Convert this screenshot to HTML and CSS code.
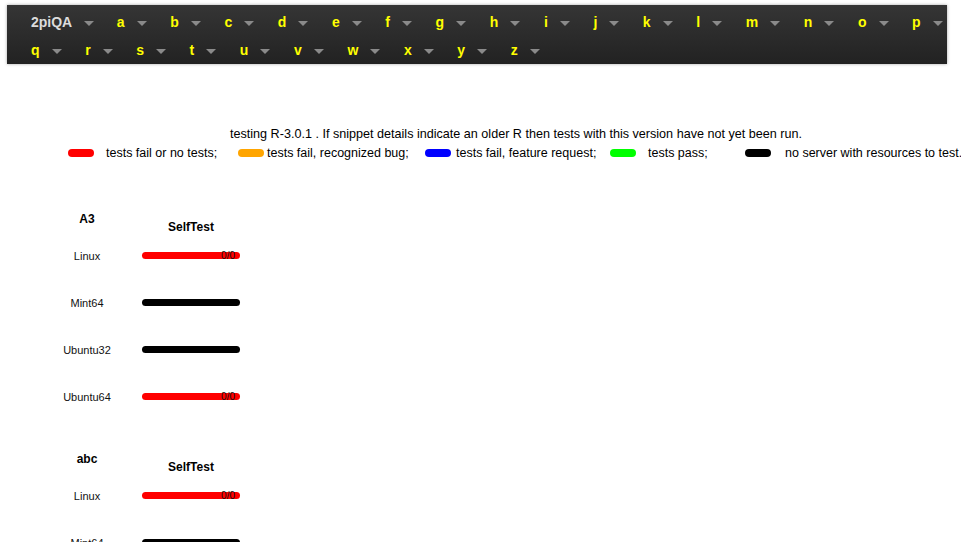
FILE: index.html
```html
<!DOCTYPE html>
<html>
<head>
<meta charset="utf-8">
<title>2piQA</title>
<link rel="stylesheet" href="styles.css">
</head>
<body>
<nav class="nav">
  <div class="nav-row">
    <a class="item brand">2piQA<span class="arrow"></span></a>
    <a class="item">a<span class="arrow"></span></a>
    <a class="item">b<span class="arrow"></span></a>
    <a class="item">c<span class="arrow"></span></a>
    <a class="item">d<span class="arrow"></span></a>
    <a class="item">e<span class="arrow"></span></a>
    <a class="item">f<span class="arrow"></span></a>
    <a class="item">g<span class="arrow"></span></a>
    <a class="item">h<span class="arrow"></span></a>
    <a class="item">i<span class="arrow"></span></a>
    <a class="item">j<span class="arrow"></span></a>
    <a class="item">k<span class="arrow"></span></a>
    <a class="item">l<span class="arrow"></span></a>
    <a class="item">m<span class="arrow"></span></a>
    <a class="item">n<span class="arrow"></span></a>
    <a class="item">o<span class="arrow"></span></a>
    <a class="item">p<span class="arrow"></span></a>
  </div>
  <div class="nav-row">
    <a class="item">q<span class="arrow"></span></a>
    <a class="item">r<span class="arrow"></span></a>
    <a class="item">s<span class="arrow"></span></a>
    <a class="item">t<span class="arrow"></span></a>
    <a class="item">u<span class="arrow"></span></a>
    <a class="item">v<span class="arrow"></span></a>
    <a class="item">w<span class="arrow"></span></a>
    <a class="item">x<span class="arrow"></span></a>
    <a class="item">y<span class="arrow"></span></a>
    <a class="item">z<span class="arrow"></span></a>
  </div>
</nav>

<div class="info">
  <div class="title">testing R-3.0.1 . If snippet details indicate an older R then tests with this version have not yet been run.</div>
  <div class="legend">
    <span class="pill red"></span><span class="ltext">tests fail or no tests;</span>
    <span class="pill orange"></span><span class="ltext">tests fail, recognized bug;</span>
    <span class="pill blue"></span><span class="ltext">tests fail, feature request;</span>
    <span class="pill green"></span><span class="ltext">tests pass;</span>
    <span class="pill black"></span><span class="ltext">no server with resources to test.</span>
  </div>
</div>

<div class="section first">
  <div class="pkg">A3</div><div class="test">SelfTest</div>
  <div class="os">Linux</div><div class="cell"><div class="bar red"><span class="count">0/0</span></div></div>
  <div class="os">Mint64</div><div class="cell"><div class="bar black"></div></div>
  <div class="os">Ubuntu32</div><div class="cell"><div class="bar black"></div></div>
  <div class="os">Ubuntu64</div><div class="cell"><div class="bar red"><span class="count">0/0</span></div></div>
</div>

<div class="section">
  <div class="pkg">abc</div><div class="test">SelfTest</div>
  <div class="os">Linux</div><div class="cell"><div class="bar red"><span class="count">0/0</span></div></div>
  <div class="os">Mint64</div><div class="cell"><div class="bar black"></div></div>
  <div class="os">Ubuntu32</div><div class="cell"><div class="bar black"></div></div>
  <div class="os">Ubuntu64</div><div class="cell"><div class="bar red"><span class="count">0/0</span></div></div>
</div>
</body>
</html>
```
FILE: styles.css
```css
html, body {
  margin: 0;
  padding: 0;
  background: #fff;
  font-family: "Liberation Sans", Arial, sans-serif;
  font-size: 12px;
  color: #000;
  overflow: hidden;
}

.nav {
  margin: 5px 0 0 7px;
  width: 940px;
  height: 59px;
  box-sizing: border-box;
  padding: 3px 0 0 12px;
  background: linear-gradient(#353535, #222222);
  box-shadow: 0 0 3px rgba(0, 0, 0, 0.35);
  overflow: hidden;
}

.nav-row {
  display: flex;
  height: 28px;
  align-items: center;
  white-space: nowrap;
}

.item {
  display: flex;
  align-items: center;
  padding: 0 11.6px 0 12px;
  font-size: 14px;
  font-weight: bold;
  color: #ffff00;
  line-height: 28px;
}

.item.brand {
  color: #dcdcdc;
  padding-right: 10.6px;
}

.arrow {
  display: inline-block;
  width: 0;
  height: 0;
  margin-left: 12px;
  margin-top: 3px;
  border-left: 5px solid transparent;
  border-right: 5px solid transparent;
  border-top: 5px solid #8a8a8a;
}

.info {
  margin-top: 63px;
}

.title {
  padding-left: 71px;
  text-align: center;
  font-size: 12.6px;
  line-height: 14px;
  white-space: nowrap;
}

.legend {
  margin-top: 5px;
  padding-left: 68px;
  display: grid;
  grid-template-columns: 38px 132px 29px 158px 31px 154px 38px 97px 40px auto;
  align-items: center;
  font-size: 12.5px;
  line-height: 14px;
  white-space: nowrap;
}

.pill {
  display: block;
  width: 26px;
  height: 8px;
  border-radius: 4px;
}

.red { background: #ff0000; }
.orange { background: #ffa500; }
.blue { background: #0000ff; }
.green { background: #00ff00; }
.black { background: #000000; }

.section {
  margin: 32px 0 0 50px;
  display: grid;
  grid-template-columns: 74px 98px;
  column-gap: 18px;
  grid-template-rows: 20px repeat(4, 47px);
  align-items: center;
}

.section.first {
  margin-top: 52px;
}

.pkg {
  align-self: start;
  text-align: center;
  font-weight: bold;
  line-height: 14px;
}

.test {
  align-self: start;
  padding-top: 7px;
  text-align: center;
  font-weight: bold;
  line-height: 16px;
}

.os {
  text-align: center;
  font-size: 11px;
  color: #111;
}

.cell {
  display: flex;
  align-items: center;
}

.bar {
  width: 98px;
  height: 7px;
  border-radius: 4px;
  display: flex;
  justify-content: flex-end;
  align-items: center;
}

.count {
  font-size: 10px;
  line-height: 7px;
  padding-right: 5px;
  color: #111;
}
```
